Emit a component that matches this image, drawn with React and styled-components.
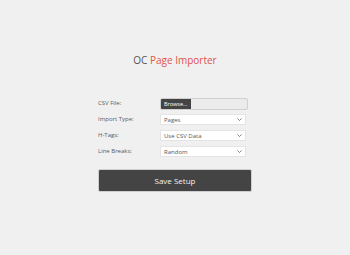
import React from "react";
import styled, { createGlobalStyle } from "styled-components";

const Global = createGlobalStyle`
  html, body { margin: 0; padding: 0; background: #f0f0f0; }
  body { font-family: "Open Sans", "Liberation Sans", sans-serif; }
`;

const Page = styled.div`
  width: 350px;
  height: 255px;
  display: flex;
  flex-direction: column;
  align-items: center;
  box-sizing: border-box;
  padding-top: 53px;
`;

const Title = styled.h1`
  margin: 0;
  font-size: 10px;
  line-height: 14px;
  font-weight: 400;
  color: #555;
`;

const Accent = styled.span`
  color: #e0534a;
`;

const Form = styled.form`
  margin-top: 31px;
  width: 154px;
  display: flex;
  flex-direction: column;
`;

const Grid = styled.div`
  display: grid;
  grid-template-columns: 62px 1fr;
  row-gap: 5px;
  align-items: center;
`;

const Label = styled.label`
  font-size: 6px;
  color: #5a5a5a;
  line-height: 11px;
`;

const FileField = styled.div`
  width: 88px;
  height: 12px;
  box-sizing: border-box;
  border: 1px solid #cfcfcf;
  border-radius: 2px;
  background: #ebebeb;
  display: flex;
  overflow: hidden;
  margin-bottom: -1px;
`;

const BrowseBtn = styled.span`
  width: 30px;
  background: #444;
  color: #fff;
  font-size: 5.5px;
  line-height: 10px;
  padding-left: 3px;
  box-sizing: border-box;
`;

const Select = styled.div`
  width: 86px;
  height: 11px;
  box-sizing: border-box;
  background: #fff;
  border: 1px solid #e4e4e4;
  display: flex;
  align-items: center;
  justify-content: space-between;
  padding: 0 3px;
  font-size: 6px;
  color: #555;
`;

const Chevron = () => (
  <svg width="5" height="3" viewBox="0 0 5 3">
    <path d="M0.5 0.5 L2.5 2.5 L4.5 0.5" stroke="#666" strokeWidth="0.8" fill="none" />
  </svg>
);

const SaveButton = styled.button`
  margin-top: 12px;
  width: 154px;
  height: 23px;
  box-sizing: border-box;
  background: #444;
  color: #f2f2f2;
  border: 1px solid #cfcfcf;
  border-radius: 2px;
  font-family: "Open Sans", "Liberation Sans", sans-serif;
  font-size: 8px;
  padding: 0;
`;

const rows = [
  ["Import Type:", "Pages"],
  ["H-Tags:", "Use CSV Data"],
  ["Line Breaks:", "Random"],
];

export default function App() {
  return (
    <Page>
      <Global />
      <Title>
        OC <Accent>Page Importer</Accent>
      </Title>
      <Form onSubmit={(e) => e.preventDefault()}>
        <Grid>
          <Label>CSV File:</Label>
          <FileField>
            <BrowseBtn>Browse...</BrowseBtn>
          </FileField>
          {rows.map(([l, v]) => (
            <React.Fragment key={l}>
              <Label>{l}</Label>
              <Select>
                <span>{v}</span>
                <Chevron />
              </Select>
            </React.Fragment>
          ))}
        </Grid>
        <SaveButton type="submit">Save Setup</SaveButton>
      </Form>
    </Page>
  );
}
